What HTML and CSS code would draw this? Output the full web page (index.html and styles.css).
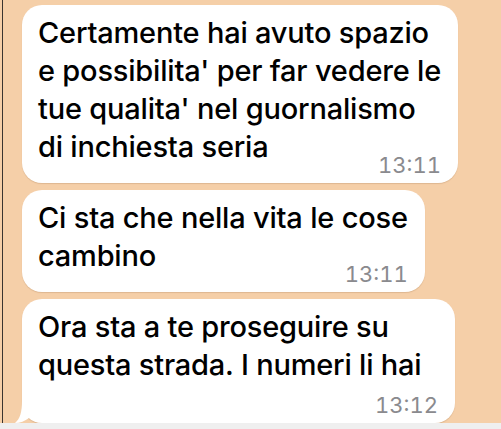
FILE: index.html
```html
<!DOCTYPE html>
<html lang="it">
<head>
    <meta charset="UTF-8">
    <meta name="viewport" content="width=device-width, initial-scale=1.0">
    <title>Chat</title>
    <link rel="stylesheet" href="styles.css">
</head>
<body>
    <div id="chat">
        <div class="bubble">
            <div class="text">Certamente hai avuto spazio<br>e possibilita' per far vedere le<br>tue qualita' nel guornalismo<br>di inchiesta seria</div>
            <div class="time">13:11</div>
        </div>
        <div class="bubble">
            <div class="text">Ci sta che nella vita le cose<br>cambino</div>
            <div class="time">13:11</div>
        </div>
        <div class="bubble last">
            <div class="text">Ora sta a te proseguire su<br>questa strada. I numeri li hai</div>
            <div class="time">13:12</div>
            <svg class="tail" width="16" height="22" viewBox="0 0 16 22">
                <path d="M8 0 C8 11 6 18 1 22 C6 22 11 20 15 17 L15 0 Z" fill="#fff"/>
            </svg>
        </div>
    </div>
    <div id="bottomBar"></div>
</body>
</html>
```

FILE: styles.css
```css
body {
    font-family: Inter, "Noto Sans", sans-serif;
    margin: 0;
    padding: 0;
    height: 100vh;
    display: flex;
    flex-direction: column;
    background-color: #f5cfa8;
    overflow: hidden;
}

#chat {
    flex-grow: 1;
    margin-left: 2px;
    border-left: 1px solid #3a3430;
    padding: 5px 0 0 19px;
    display: flex;
    flex-direction: column;
    align-items: flex-start;
    gap: 7px;
    overflow: hidden;
}

.bubble {
    position: relative;
    background: #fff;
    border-radius: 20px;
    padding: 9px 17px 7px 16px;
    box-shadow: 0 1px 1px rgba(120, 80, 40, 0.18);
}

.bubble.last {
    min-width: 400px;
}

.text {
    font-size: 29px;
    font-weight: 500;
    letter-spacing: -0.2px;
    line-height: 38px;
    color: #000;
    white-space: nowrap;
}

.time {
    font-size: 22px;
    font-variant-numeric: tabular-nums;
    line-height: 22px;
    color: #8a8a8e;
    text-align: right;
    margin-top: -12px;
}

.bubble.last .time {
    margin-top: 10px;
}

.tail {
    position: absolute;
    left: -8px;
    bottom: 0;
}

#bottomBar {
    height: 6px;
    background: #efefef;
}
```
